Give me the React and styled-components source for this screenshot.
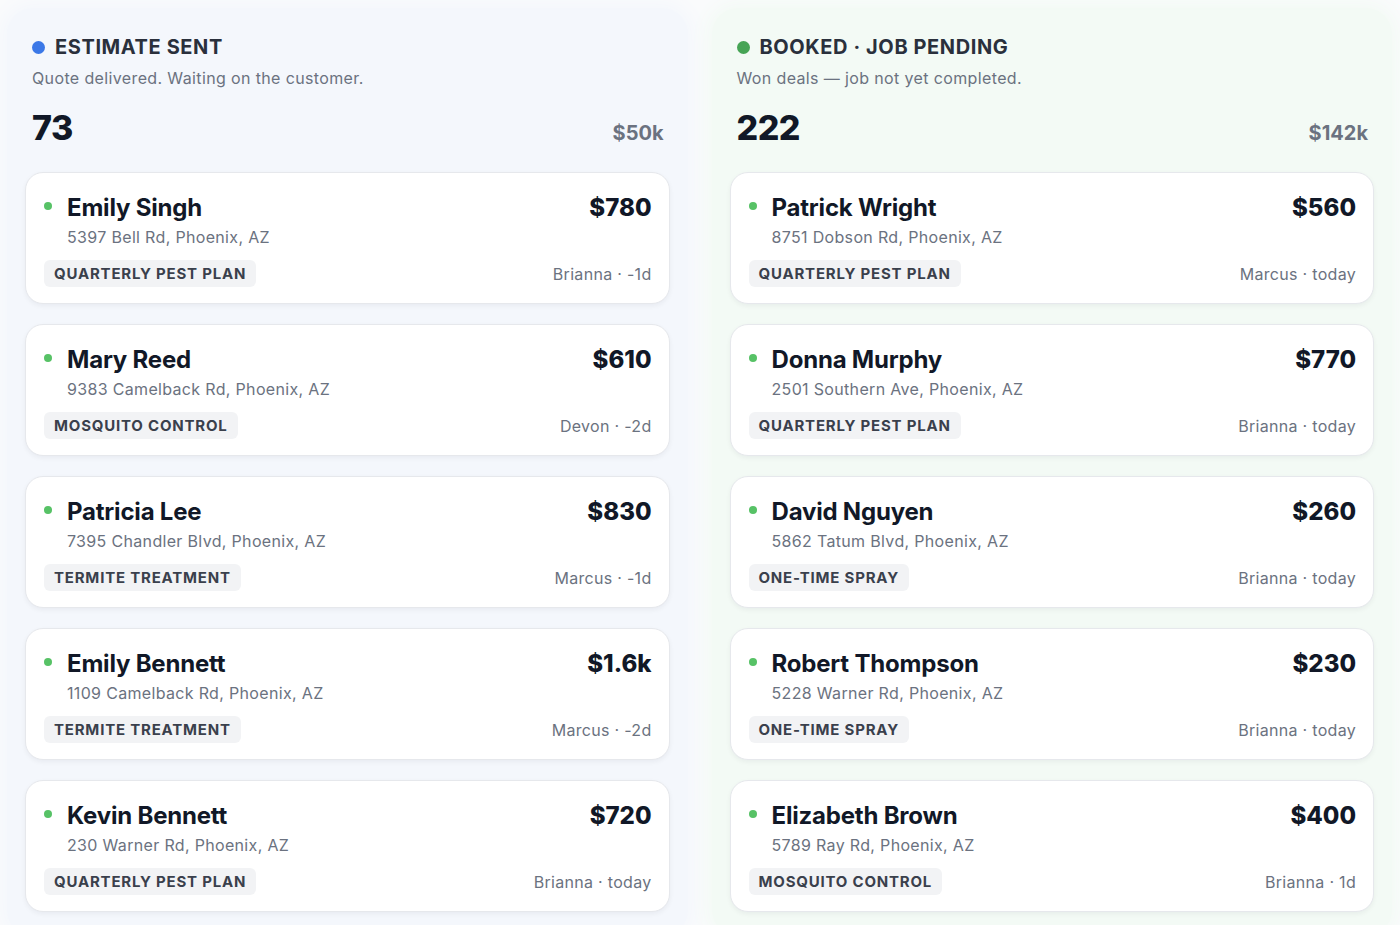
import React from 'react';
import styled, { createGlobalStyle } from 'styled-components';

const GlobalStyle = createGlobalStyle`
  html, body {
    margin: 0;
    padding: 0;
    background: #fafbfc;
    font-family: Inter, "Noto Sans", "Liberation Sans", sans-serif;
    -webkit-font-smoothing: antialiased;
    overflow: hidden;
  }
  * { box-sizing: border-box; }
`;

const Board = styled.div`
  display: grid;
  grid-template-columns: 1fr 1fr;
  gap: 24px;
  padding: 8px 8px 8px 7px;
  height: 925px;
`;

const Column = styled.section`
  background: ${p => p.tint};
  border-radius: 26px;
  padding: 25px 18px 24px;
  box-shadow: 0 0 18px 6px ${p => p.tint};
  display: flex;
  flex-direction: column;
`;

const Header = styled.div`
  padding: 0 6px 0 7px;
`;

const TitleRow = styled.div`
  display: flex;
  align-items: center;
  gap: 10px;
`;

const StageDot = styled.span`
  width: 13px;
  height: 13px;
  border-radius: 50%;
  background: ${p => p.color};
  flex-shrink: 0;
`;

const Title = styled.h2`
  margin: 0;
  font-size: 20px;
  line-height: 28px;
  font-weight: 700;
  letter-spacing: 0.6px;
  color: #2a303c;
`;

const Subtitle = styled.p`
  margin: 5px 0 0;
  font-size: 16px;
  line-height: 24px;
  color: #6b7280;
  letter-spacing: 0.37px;
`;

const Totals = styled.div`
  display: flex;
  justify-content: space-between;
  align-items: baseline;
  margin-top: 18px;
`;

const Count = styled.div`
  font-size: 34px;
  line-height: 40px;
  font-weight: 800;
  color: #111827;
  letter-spacing: -0.5px;
`;

const Sum = styled.div`
  font-size: 20px;
  font-weight: 700;
  color: #6b7280;
`;

const CardList = styled.div`
  display: flex;
  flex-direction: column;
  gap: 20px;
  margin-top: 24px;
`;

const Card = styled.article`
  background: #ffffff;
  border: 1px solid #e6e8ec;
  border-radius: 18px;
  padding: 20px 17px 16px 18px;
  box-shadow: 0 2px 5px rgba(17, 24, 39, 0.05);
`;

const TopRow = styled.div`
  display: flex;
  align-items: center;
  justify-content: space-between;
`;

const NameWrap = styled.div`
  display: flex;
  align-items: center;
  gap: 15px;
`;

const LeadDot = styled.span`
  width: 8px;
  height: 8px;
  border-radius: 50%;
  background: #57c266;
  margin-top: -4px;
`;

const Name = styled.div`
  font-size: 24px;
  line-height: 30px;
  font-weight: 700;
  color: #111827;
  letter-spacing: -0.2px;
`;

const Price = styled.div`
  font-size: 24px;
  line-height: 30px;
  font-weight: 800;
  color: #111827;
`;

const Address = styled.div`
  margin: 3px 0 0 23px;
  font-size: 16px;
  line-height: 22px;
  color: #6b7280;
  letter-spacing: 0.33px;
`;

const BottomRow = styled.div`
  display: flex;
  align-items: center;
  justify-content: space-between;
  margin-top: 12px;
`;

const Tag = styled.span`
  background: #f2f3f5;
  border-radius: 6px;
  padding: 0 10px;
  height: 27px;
  display: inline-flex;
  align-items: center;
  font-size: 15px;
  font-weight: 700;
  letter-spacing: 0.8px;
  color: #3a404c;
`;

const Meta = styled.span`
  font-size: 16px;
  color: #6b7280;
  letter-spacing: 0.3px;
`;

const columns = [
  {
    title: 'ESTIMATE SENT',
    dot: '#3b78e7',
    tint: '#f4f7fc',
    subtitle: 'Quote delivered. Waiting on the customer.',
    count: '73',
    sum: '$50k',
    cards: [
      { name: 'Emily Singh', price: '$780', address: '5397 Bell Rd, Phoenix, AZ', tag: 'Quarterly Pest Plan', meta: 'Brianna · -1d' },
      { name: 'Mary Reed', price: '$610', address: '9383 Camelback Rd, Phoenix, AZ', tag: 'Mosquito Control', meta: 'Devon · -2d' },
      { name: 'Patricia Lee', price: '$830', address: '7395 Chandler Blvd, Phoenix, AZ', tag: 'Termite Treatment', meta: 'Marcus · -1d' },
      { name: 'Emily Bennett', price: '$1.6k', address: '1109 Camelback Rd, Phoenix, AZ', tag: 'Termite Treatment', meta: 'Marcus · -2d' },
      { name: 'Kevin Bennett', price: '$720', address: '230 Warner Rd, Phoenix, AZ', tag: 'Quarterly Pest Plan', meta: 'Brianna · today' },
    ],
  },
  {
    title: 'BOOKED · JOB PENDING',
    dot: '#46a455',
    tint: '#f3faf5',
    subtitle: 'Won deals — job not yet completed.',
    count: '222',
    sum: '$142k',
    cards: [
      { name: 'Patrick Wright', price: '$560', address: '8751 Dobson Rd, Phoenix, AZ', tag: 'Quarterly Pest Plan', meta: 'Marcus · today' },
      { name: 'Donna Murphy', price: '$770', address: '2501 Southern Ave, Phoenix, AZ', tag: 'Quarterly Pest Plan', meta: 'Brianna · today' },
      { name: 'David Nguyen', price: '$260', address: '5862 Tatum Blvd, Phoenix, AZ', tag: 'One-Time Spray', meta: 'Brianna · today' },
      { name: 'Robert Thompson', price: '$230', address: '5228 Warner Rd, Phoenix, AZ', tag: 'One-Time Spray', meta: 'Brianna · today' },
      { name: 'Elizabeth Brown', price: '$400', address: '5789 Ray Rd, Phoenix, AZ', tag: 'Mosquito Control', meta: 'Brianna · 1d' },
    ],
  },
];

const App = () => (
  <>
    <GlobalStyle />
    <Board>
      {columns.map(col => (
        <Column key={col.title} tint={col.tint}>
          <Header>
            <TitleRow>
              <StageDot color={col.dot} />
              <Title>{col.title}</Title>
            </TitleRow>
            <Subtitle>{col.subtitle}</Subtitle>
            <Totals>
              <Count>{col.count}</Count>
              <Sum>{col.sum}</Sum>
            </Totals>
          </Header>
          <CardList>
            {col.cards.map(card => (
              <Card key={card.name}>
                <TopRow>
                  <NameWrap>
                    <LeadDot />
                    <Name>{card.name}</Name>
                  </NameWrap>
                  <Price>{card.price}</Price>
                </TopRow>
                <Address>{card.address}</Address>
                <BottomRow>
                  <Tag>{card.tag.toUpperCase()}</Tag>
                  <Meta>{card.meta}</Meta>
                </BottomRow>
              </Card>
            ))}
          </CardList>
        </Column>
      ))}
    </Board>
  </>
);

export default App;
